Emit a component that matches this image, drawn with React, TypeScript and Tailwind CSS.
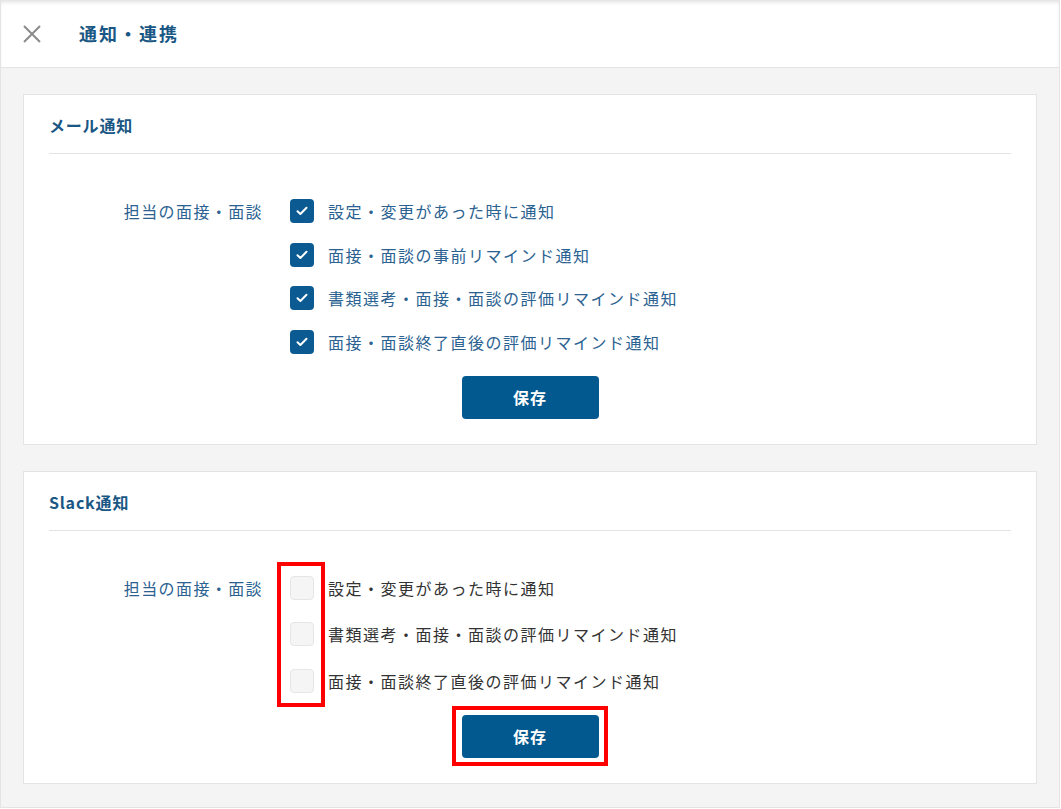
import React from 'react';

type Item = { label: string; checked: boolean };

const mailItems: Item[] = [
    { label: '設定・変更があった時に通知', checked: true },
    { label: '面接・面談の事前リマインド通知', checked: true },
    { label: '書類選考・面接・面談の評価リマインド通知', checked: true },
    { label: '面接・面談終了直後の評価リマインド通知', checked: true },
];

const slackItems: Item[] = [
    { label: '設定・変更があった時に通知', checked: false },
    { label: '書類選考・面接・面談の評価リマインド通知', checked: false },
    { label: '面接・面談終了直後の評価リマインド通知', checked: false },
];

const CheckBox = ({ checked }: { checked: boolean }) => (
    checked ? (
        <span className="w-6 h-6 rounded-[4px] bg-[#0b5a92] flex items-center justify-center shrink-0">
            <svg viewBox="0 0 12 10" className="w-[12px] h-[10px]" fill="none" stroke="white" strokeWidth="2" strokeLinecap="round" strokeLinejoin="round">
                <path d="M1.5 5.2 L4.4 8 L10.5 1.8" />
            </svg>
        </span>
    ) : (
        <span className="w-6 h-6 rounded-[4px] bg-[#f5f5f5] border border-[#e6e6e6] shrink-0" />
    )
);

const Section = ({ title, items, rowGap, textColor }: { title: string; items: Item[]; rowGap: string; textColor: string }) => (
    <div className="bg-white border border-[#e4e4e4]">
        {/* 見出し */}
        <div className="mx-[25px] pt-[18px] pb-[16px] border-b border-[#e4e4e4]">
            <h2 className="text-[16px] leading-6 font-bold text-[#1a5784] tracking-[0.8px]">{title}</h2>
        </div>
        <div className="flex items-start pt-[45px]">
            <div className="w-[239px] h-6 flex items-center justify-end text-[16px] text-[#2b6291] tracking-[1.4px]">
                担当の面接・面談
            </div>
            <div className={`ml-[27px] flex flex-col ${rowGap}`}>
                {items.map((item) => (
                    <label key={item.label} className="flex items-center gap-[14px] h-6">
                        <CheckBox checked={item.checked} />
                        <span className={`text-[16px] tracking-[1.5px] whitespace-nowrap ${textColor}`}>{item.label}</span>
                    </label>
                ))}
            </div>
        </div>
        <div className="flex justify-center pt-[22px] pb-[25px]">
            <button className="w-[137px] h-[43px] rounded-[4px] bg-[#02598f] text-white text-[16px] font-bold tracking-[1px]">
                保存
            </button>
        </div>
    </div>
);

export default function App() {
    return (
        <div
            className="relative w-[1060px] h-[808px] bg-[#f4f4f4] border-x border-b border-[#e4e4e4] flex flex-col"
            style={{ fontFamily: '"Noto Sans CJK JP", "Noto Sans", sans-serif' }}
        >
            {/* ヘッダー */}
            <div className="h-[68px] bg-white border-b border-[#e4e4e4] flex items-center shadow-[inset_0_4px_4px_-2px_rgba(0,0,0,0.13)]">
                <svg viewBox="0 0 20 20" className="ml-[21px] w-5 h-5" fill="none" stroke="#8a8a8a" strokeWidth="2">
                    <path d="M2 2 L18 18 M18 2 L2 18" />
                </svg>
                <h1 className="ml-[37px] text-[18px] font-bold text-[#1a5784] tracking-[2px]">通知・連携</h1>
            </div>

            <div className="flex flex-col gap-[26px] px-[22px] pt-[26px]">
                <Section title="メール通知" items={mailItems} rowGap="gap-[19.5px]" textColor="text-[#2b6291]" />
                <Section title="Slack通知" items={slackItems} rowGap="gap-[22.5px]" textColor="text-[#333333]" />
            </div>

            {/* 注釈の赤枠 */}
            <div className="absolute left-[276px] top-[562px] w-[48px] h-[145px] border-4 border-[#ff0000] pointer-events-none" />
            <div className="absolute left-[451px] top-[706px] w-[156px] h-[60px] border-4 border-[#ff0000] pointer-events-none" />
        </div>
    );
}
